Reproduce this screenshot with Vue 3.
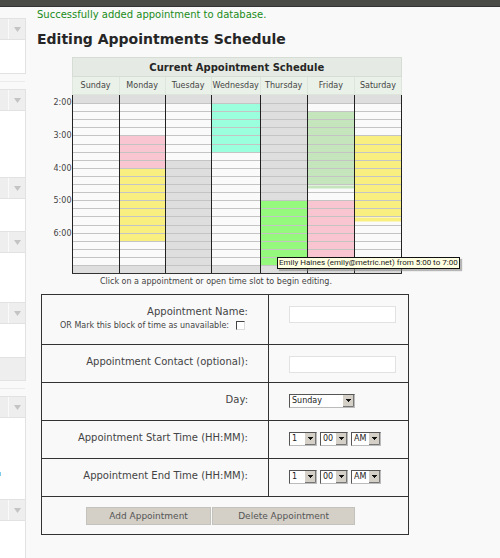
<script setup>
import { ref } from 'vue'

const panels = [
  [{ body: 33 }],
  [{ body: 66 }, { body: 32 }, { body: 49 }, { body: 33, footer: true }],
  [{ body: 81, link: true }, { body: 60 }],
]

const days = ['Sunday', 'Monday', 'Tuesday', 'Wednesday', 'Thursday', 'Friday', 'Saturday']

// Slots are quarter hours; the first one starts at 1:45 and the last one at 7:00.
const slotCount = 22
const bookings = [
  [],
  [{ from: 5, to: 9, tone: 'pink' }, { from: 9, to: 18, tone: 'yellow' }],
  [{ from: 8, to: 21, tone: 'closed' }],
  [{ from: 1, to: 7, tone: 'aqua' }],
  [{ from: 1, to: 13, tone: 'closed' }, { from: 13, to: 21, tone: 'green' }],
  [{ from: 2, to: 11.5, tone: 'sage' }, { from: 13, to: 21, tone: 'pink' }],
  [{ from: 5, to: 15.5, tone: 'yellow' }],
]

function slotClass(day, slot) {
  if (slot === 0 || slot === slotCount - 1) return 'closed'
  const hit = bookings[day].find((b) => slot >= b.from && slot < b.to)
  if (!hit) return ''
  return hit.to - slot < 1 ? [hit.tone, 'half'] : hit.tone
}

function hourLabel(slot) {
  return slot % 4 === 0 && slot < 20 ? `${slot / 4 + 2}:00` : ''
}

const name = ref('')
const contact = ref('')
const unavailable = ref(false)
const day = ref('Sunday')
const hours = Array.from({ length: 12 }, (_, i) => String(i + 1))
const minutes = ['00', '15', '30', '45']
const times = ref([
  { id: 'start', label: 'Appointment Start Time (HH:MM):', hour: '1', minute: '00', half: 'AM' },
  { id: 'end', label: 'Appointment End Time (HH:MM):', hour: '1', minute: '00', half: 'AM' },
])
</script>

<template>
  <div class="page">
    <header class="topbar"></header>
    <div class="columns">
      <aside class="sidebar">
        <div v-for="(group, g) in panels" :key="g" class="group">
          <section v-for="(panel, p) in group" :key="p">
            <button class="panel-head" type="button" aria-label="Toggle panel">
              <span class="panel-title"></span>
              <span class="panel-toggle">
                <svg width="7" height="5" viewBox="0 0 7 5"><path d="M0 0H7L3.5 5Z" fill="#c4c4c4" /></svg>
              </span>
            </button>
            <div class="panel-body" :style="{ height: panel.body + 'px' }">
              <i v-if="panel.link" class="link-edge"></i>
            </div>
            <div v-if="panel.footer" class="panel-foot"></div>
          </section>
        </div>
      </aside>

      <main class="content">
        <p class="notice">Successfully added appointment to database.</p>
        <h1>Editing Appointments Schedule</h1>

        <div class="schedule-wrap">
          <table class="schedule">
            <colgroup>
              <col class="col-time" />
              <col v-for="d in days" :key="d" :class="{ 'col-wide': d === 'Wednesday', 'col-slim': d === 'Monday' || d === 'Tuesday' }" />
            </colgroup>
            <thead>
              <tr class="title-row">
                <td></td>
                <th colspan="7">Current Appointment Schedule</th>
              </tr>
              <tr class="day-row">
                <td></td>
                <th v-for="d in days" :key="d" scope="col">{{ d }}</th>
              </tr>
            </thead>
            <tbody>
              <tr v-for="(_, s) in slotCount" :key="s">
                <th v-if="s % 2 === 0" rowspan="2" scope="row">{{ hourLabel(s) }}</th>
                <td v-for="(d, i) in days" :key="d" :class="slotClass(i, s)"></td>
              </tr>
            </tbody>
          </table>
          <div class="tip" role="tooltip">Emily Haines (emily@metric.net) from 5:00 to 7:00</div>
          <p class="hint">Click on a appointment or open time slot to begin editing.</p>
        </div>

        <form class="editor" @submit.prevent>
          <div class="row tall">
            <div class="label">
              <label for="name">Appointment Name:</label>
              <div class="mark">
                <label for="unavailable">OR Mark this block of time as unavailable:</label>
                <input id="unavailable" v-model="unavailable" type="checkbox" />
              </div>
            </div>
            <div class="field"><input id="name" v-model="name" type="text" /></div>
          </div>
          <div class="row">
            <div class="label"><label for="contact">Appointment Contact (optional):</label></div>
            <div class="field"><input id="contact" v-model="contact" type="text" /></div>
          </div>
          <div class="row">
            <div class="label"><label for="day">Day:</label></div>
            <div class="field">
              <span class="drop day">
                <select id="day" v-model="day"><option v-for="d in days" :key="d">{{ d }}</option></select>
                <svg width="11" height="12" viewBox="0 0 11 12"><path d="M0 0H11V12H0Z" fill="#d4d0c8" /><path d="M10.5 0V11.5H0" fill="none" stroke="#777" /><path d="M3 4H8V5H7V6H6V7H5V6H4V5H3Z" fill="#111" /></svg>
              </span>
            </div>
          </div>
          <div v-for="t in times" :key="t.id" class="row">
            <div class="label"><label :for="t.id">{{ t.label }}</label></div>
            <div class="field">
              <span class="drop">
                <select :id="t.id" v-model="t.hour"><option v-for="h in hours" :key="h">{{ h }}</option></select>
                <svg width="11" height="12" viewBox="0 0 11 12"><path d="M0 0H11V12H0Z" fill="#d4d0c8" /><path d="M10.5 0V11.5H0" fill="none" stroke="#777" /><path d="M3 4H8V5H7V6H6V7H5V6H4V5H3Z" fill="#111" /></svg>
              </span>
              <span class="drop">
                <select v-model="t.minute" aria-label="Minutes"><option v-for="m in minutes" :key="m">{{ m }}</option></select>
                <svg width="11" height="12" viewBox="0 0 11 12"><path d="M0 0H11V12H0Z" fill="#d4d0c8" /><path d="M10.5 0V11.5H0" fill="none" stroke="#777" /><path d="M3 4H8V5H7V6H6V7H5V6H4V5H3Z" fill="#111" /></svg>
              </span>
              <span class="drop half-day">
                <select v-model="t.half" aria-label="AM or PM"><option>AM</option><option>PM</option></select>
                <svg width="11" height="12" viewBox="0 0 11 12"><path d="M0 0H11V12H0Z" fill="#d4d0c8" /><path d="M10.5 0V11.5H0" fill="none" stroke="#777" /><path d="M3 4H8V5H7V6H6V7H5V6H4V5H3Z" fill="#111" /></svg>
              </span>
            </div>
          </div>
          <div class="actions">
            <button type="submit">Add Appointment</button>
            <button type="button">Delete Appointment</button>
          </div>
        </form>
      </main>
    </div>
  </div>
</template>

<style>
body {
  background: #f9f9f9;
}
</style>

<style scoped>
.page {
  font-family: "DejaVu Sans", Verdana, sans-serif;
  font-size: 10px;
  color: #444;
  overflow: hidden;
  min-height: 100vh;
  box-sizing: border-box;
}
.topbar {
  height: 6px;
  background: #4a4a47;
  border-bottom: 1px solid #333;
}
.columns {
  display: flex;
  align-items: flex-start;
}
.sidebar {
  width: 26px;
  flex: none;
  padding-top: 11px;
}
.group {
  border-right: 1px solid #e2e2e2;
  border-bottom: 1px solid #e2e2e2;
}
.group + .group {
  position: relative;
  margin-top: 15px;
}
.group + .group::before {
  content: "";
  position: absolute;
  top: -8px;
  left: 0;
  right: 0;
  height: 1px;
  background: #ebebeb;
}
.group:last-child {
  border-bottom: 0;
}
.panel-head {
  display: flex;
  width: 100%;
  height: 22px;
  padding: 0;
  border: solid #e2e2e2;
  border-width: 1px 0;
  background: #eee;
}
.panel-title {
  width: 8px;
  height: 100%;
  border-right: 1px solid #fafafa;
}
.panel-toggle {
  flex: 1;
  height: 100%;
  display: grid;
  place-items: center;
}
.panel-body {
  background: #fff;
  display: flex;
  align-items: flex-end;
}
.link-edge {
  width: 1px;
  height: 4px;
  margin-bottom: 23px;
  background: #7fcdea;
}
.panel-foot {
  height: 22px;
  background: #eee;
  border-top: 1px solid #e2e2e2;
}
.content {
  flex: 1;
  min-width: 0;
  padding: 0 16px 0 11px;
}
.notice {
  margin: 0;
  line-height: 15px;
  color: #1a8c1a;
}
h1 {
  margin: 8px 0 9px;
  font-size: 14px;
  line-height: 18px;
  color: #262626;
}
.schedule-wrap {
  position: relative;
  width: 352px;
  margin-left: 13px;
}
.schedule {
  width: 100%;
  table-layout: fixed;
  border-collapse: collapse;
}
.schedule th,
.schedule td {
  padding: 0;
}
.col-time {
  width: 22px;
}
.col-wide {
  width: 49px;
}
.col-slim {
  width: 46px;
}
.title-row th {
  height: 18px;
  border: 1px solid #d5ddd5;
  background: #e5ebe4;
  color: #262626;
  font-size: 10px;
}
.day-row th {
  height: 17px;
  border: 1px solid #dde5dd;
  background: #eaf1e8;
  font-size: 8px;
  font-weight: normal;
}
tbody tr {
  height: 8px;
}
tbody tr:nth-child(10n + 6),
tbody tr:first-child {
  height: 9px;
}
tbody td {
  border: solid #222;
  border-width: 0 1px;
  border-top: 1px solid #c4c4c4;
}
tbody tr:last-child td {
  border-bottom: 1px solid #333;
}
tbody th {
  padding-right: 1px;
  font-size: 8px;
  line-height: 10px;
  font-weight: normal;
  text-align: right;
}
.closed {
  --tone: #dedede;
}
.pink {
  --tone: #f8c5d0;
}
.yellow {
  --tone: #f8ef80;
}
.aqua {
  --tone: #99ffdd;
}
.green {
  --tone: #94f97c;
}
.sage {
  --tone: #c5e6bd;
}
tbody td {
  background: var(--tone, #fafafa);
}
tbody td.half {
  background: linear-gradient(var(--tone) 50%, #fafafa 50%);
}
.tip {
  position: absolute;
  top: 200px;
  left: 227px;
  padding: 0 1px;
  border: 1px solid #111;
  background: #ffffe1;
  box-shadow: 2px 2px 1px #8889;
  color: #222;
  font-family: Roboto, Tahoma, sans-serif;
  font-size: 8px;
  line-height: 10px;
  white-space: nowrap;
}
.hint {
  margin: 2px 0 0;
  padding-left: 50px;
  font-size: 8px;
  line-height: 12px;
  white-space: nowrap;
}
.editor {
  width: 368px;
  box-sizing: border-box;
  margin: 6px 0 0 4px;
  border: 1px solid #333;
}
.row {
  display: grid;
  grid-template-columns: 227px 1fr;
  min-height: 37px;
  border-bottom: 1px solid #333;
}
.row.tall {
  min-height: 49px;
}
.label {
  padding: 10px 20px 0 0;
  border-right: 1px solid #333;
  text-align: right;
  line-height: 13px;
}
.mark {
  display: flex;
  align-items: center;
  justify-content: flex-end;
  gap: 7px;
  padding-right: 3px;
  font-size: 8px;
  line-height: 15px;
}
.mark input {
  appearance: none;
  width: 9px;
  height: 9px;
  margin: 0;
  border: 1px solid #ddd;
  border-top-color: #444;
  border-left-color: #444;
  background: #fff;
}
.mark input:checked {
  background: #555;
}
.field {
  display: flex;
  align-items: flex-start;
  gap: 3px;
  padding: 11px 12px 0 20px;
}
.field input {
  width: 100%;
  height: 17px;
  box-sizing: border-box;
  padding: 0 3px;
  border: 1px solid #e2e2e2;
  background: #fff;
  font: inherit;
}
.drop {
  display: inline-grid;
  align-items: center;
  width: 28px;
}
.drop.day {
  width: 66px;
}
.drop.half-day {
  width: 30px;
}
.drop select {
  grid-area: 1 / 1;
  appearance: none;
  width: 100%;
  height: 14px;
  padding: 0 0 0 2px;
  border: 1px solid #bbb;
  border-top-color: #555;
  border-left-color: #555;
  border-radius: 0;
  background: #fff;
  color: #222;
  font: 8px/12px "DejaVu Sans", Verdana, sans-serif;
}
.drop svg {
  grid-area: 1 / 1;
  justify-self: end;
  margin-right: 1px;
  pointer-events: none;
}
.actions {
  display: flex;
  gap: 1px;
  padding: 10px 53px 9px 44px;
}
.actions button {
  flex: 125 1 0;
  height: 18px;
  padding: 0;
  border: 1px solid #c4c2bc;
  background: #d4d0c8;
  color: #555;
  font: inherit;
  font-size: 9px;
}
.actions button + button {
  flex-grow: 143;
}
</style>
